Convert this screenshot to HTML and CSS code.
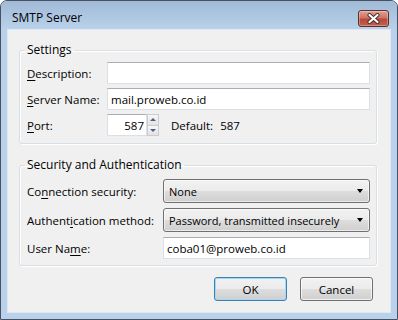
FILE: index.html
```html
<!DOCTYPE html>
<html lang="en">
<head>
  <meta charset="UTF-8" />
  <title>SMTP Server</title>
  <link rel="stylesheet" href="styles.css">
</head>
<body>
  <div class="window">
    <div class="titlebar">
      <span class="title">SMTP Server</span>
      <button type="button" class="close" aria-label="Close">
        <svg width="15" height="11" viewBox="0 0 15 11">
          <path d="M3.5 2 L11.5 9 M11.5 2 L3.5 9" stroke="#4a2a26" stroke-width="4" stroke-linecap="round"/>
          <path d="M3.5 2 L11.5 9 M11.5 2 L3.5 9" stroke="#fff" stroke-width="2.2" stroke-linecap="round"/>
        </svg>
      </button>
    </div>
    <div class="client">
      <fieldset class="group settings">
        <legend>Settings</legend>
        <div class="rows">
          <label><u>D</u>escription:</label>
          <input type="text" class="textbox" value="">
          <label><u>S</u>erver Name:</label>
          <input type="text" class="textbox" value="mail.proweb.co.id">
          <label><u>P</u>ort:</label>
          <div class="port-row">
            <input type="text" class="textbox port" value="587">
            <div class="spin">
              <span class="spin-btn"><i class="up"></i></span>
              <span class="spin-btn"><i class="down"></i></span>
            </div>
            <span class="default-label">Default:</span>
            <span>587</span>
          </div>
        </div>
      </fieldset>

      <fieldset class="group security">
        <legend>Security and Authentication</legend>
        <div class="rows">
          <label>Co<u>n</u>nection security:</label>
          <div class="combo"><span>None</span><i class="arrow"></i></div>
          <label>Authent<u>i</u>cation method:</label>
          <div class="combo"><span>Password, transmitted insecurely</span><i class="arrow"></i></div>
          <label>User Na<u>m</u>e:</label>
          <input type="text" class="textbox" value="coba01@proweb.co.id">
        </div>
      </fieldset>

      <div class="buttons">
        <button type="button" class="btn btn-default">OK</button>
        <button type="button" class="btn">Cancel</button>
      </div>
    </div>
  </div>
</body>
</html>
```

FILE: styles.css
```css
body {
  margin: 0;
  font-family: 'Open Sans', 'Liberation Sans', sans-serif;
  font-size: 11.5px;
  color: #000;
}
.window {
  width: 398px;
  height: 320px;
  box-sizing: border-box;
  border: 1px solid #47525e;
  border-radius: 7px 7px 0 0;
  background: #b9d1ea;
  padding: 0 6px 6px;
  display: flex;
  flex-direction: column;
}
.titlebar {
  height: 28px;
  margin: 0 -6px;
  padding: 0 8px 0 11px;
  display: flex;
  align-items: flex-start;
  justify-content: space-between;
  background: linear-gradient(#a0bad7, #b9d1ea);
  border-radius: 6px 6px 0 0;
}
.title {
  margin-top: 9px;
  font-size: 12px;
  line-height: 16px;
}
.close {
  margin-top: 9px;
  width: 31px;
  height: 17px;
  padding: 0;
  border: 1px solid #5e2f2a;
  border-radius: 3px;
  background: linear-gradient(#dea294 0%, #cd7566 45%, #b8483a 55%, #c0604f 100%);
  box-shadow: inset 0 0 0 1px rgba(255,255,255,0.3);
  display: flex;
  align-items: center;
  justify-content: center;
}
.client {
  flex: 1;
  background: #f0f0f0;
  border: 1px solid #dfe8f2;
  padding: 0 13px 0 11px;
}
.group {
  margin: 12px 0 0;
  border: 1px solid #d5dfe5;
  border-radius: 3px;
  box-shadow: inset 1px 1px 0 #fff, 1px 1px 0 #fff;
  padding: 4px 6px 7px 7px;
  min-width: 0;
}
.group legend {
  padding: 0 2px;
  margin-left: -2px;
  line-height: 16px;
  font-size: 12px;
}
.security {
  margin-top: 13px;
  padding-top: 6px;
  padding-bottom: 6px;
}
.rows {
  display: grid;
  grid-template-columns: 80px 1fr;
  row-gap: 4px;
  align-items: center;
}
.security .rows {
  grid-template-columns: 136px 1fr;
  row-gap: 5px;
}
label u {
  text-decoration-thickness: 1px;
  text-underline-offset: 2px;
}
.textbox {
  height: 22px;
  box-sizing: border-box;
  width: 100%;
  margin: 0;
  padding: 0 3px;
  font: inherit;
  font-size: 11.5px;
  border: 1px solid #dbdfe6;
  border-top-color: #abadb3;
  background: #fff;
  outline: none;
}
.port-row {
  display: flex;
  align-items: center;
}
.textbox.port {
  width: 40px;
  text-align: right;
  padding-right: 2px;
}
.spin {
  display: flex;
  flex-direction: column;
  width: 12px;
  height: 22px;
}
.spin-btn {
  flex: 1;
  border: 1px solid #c9ccd1;
  background: linear-gradient(#f7f7f7, #e3e3e3);
  display: flex;
  align-items: center;
  justify-content: center;
}
.spin-btn + .spin-btn {
  border-top: none;
}
.spin-btn i {
  width: 0;
  height: 0;
  border-left: 3px solid transparent;
  border-right: 3px solid transparent;
}
.spin-btn .up {
  border-bottom: 3px solid #4d6185;
}
.spin-btn .down {
  border-top: 3px solid #4d6185;
}
.default-label {
  margin-left: 12px;
  margin-right: 7px;
}
.combo {
  height: 24px;
  box-sizing: border-box;
  border: 1px solid #707070;
  border-radius: 3px;
  background: linear-gradient(#f2f2f2 0%, #ebebeb 48%, #dddddd 52%, #cfcfcf 100%);
  box-shadow: inset 0 0 0 1px rgba(255,255,255,0.6);
  padding: 0 6px 0 5px;
  display: flex;
  align-items: center;
  justify-content: space-between;
  font-size: 11px;
}
.arrow {
  width: 0;
  height: 0;
  border-left: 3.5px solid transparent;
  border-right: 3.5px solid transparent;
  border-top: 4px solid #000;
}
.buttons {
  margin-top: 11px;
  display: flex;
  justify-content: flex-end;
  gap: 13px;
  padding-right: 4px;
}
.btn {
  width: 73px;
  height: 24px;
  padding: 0;
  font: inherit;
  font-size: 11.5px;
  border: 1px solid #707070;
  border-radius: 3px;
  background: linear-gradient(#f2f2f2 0%, #ebebeb 48%, #dddddd 52%, #cfcfcf 100%);
  box-shadow: inset 0 0 0 1px rgba(255,255,255,0.7);
}
.btn-default {
  border-color: #3c7fb1;
  box-shadow: inset 0 0 0 1px #a6d8f5;
}
```
